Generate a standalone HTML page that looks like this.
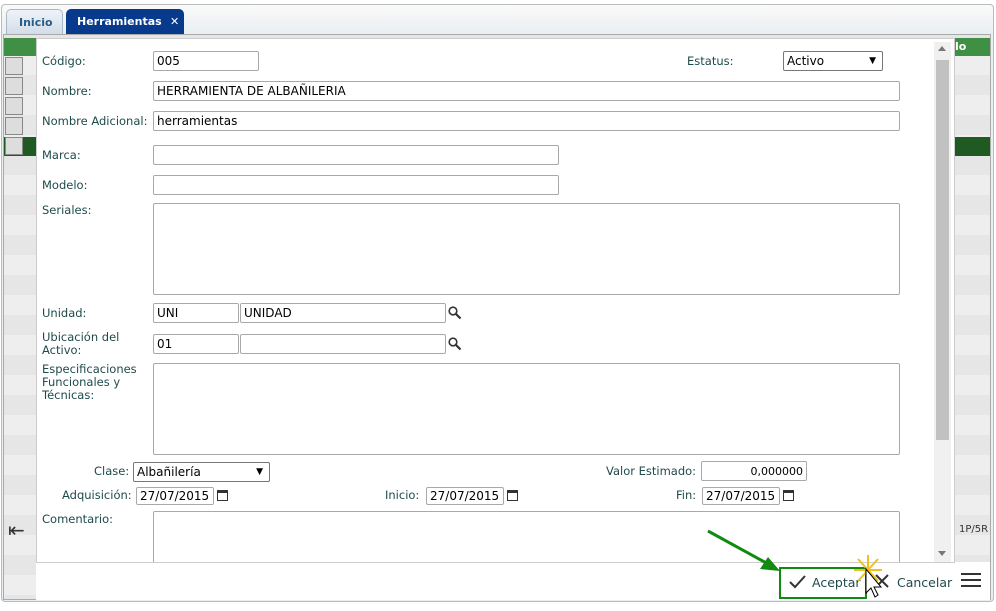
<!DOCTYPE html>
<html><head><style>
*{box-sizing:border-box}
body{margin:0;width:996px;height:611px;background:#fff;font-family:"DejaVu Sans","Liberation Sans",sans-serif;font-size:12px;color:#1f4a4a;position:relative;overflow:hidden}
.a{position:absolute}
.in{position:absolute;border:1px solid #a9a9a9;border-radius:2px;background:#fff;height:20px;font-size:12px;color:#000;padding:1px 3px;line-height:17px}
.lb{position:absolute;font-size:11.5px;color:#1f4a4a}
.cal{position:absolute;width:11px;height:11px;border:1.5px solid #333;border-top-width:3px}
</style></head><body>
<div class="a" style="left:1px;top:4px;width:993px;height:598px;border:1px solid #bbb;border-radius:4px;background:linear-gradient(#fafafa,#e8eef2 30px)"></div>
<div class="a" style="left:6px;top:9px;width:57px;height:25px;border:1px solid #a8b8c8;border-bottom:none;border-radius:5px 5px 0 0;background:linear-gradient(#eef3f8,#d3dde8);color:#2a5c8a;font-weight:bold;font-size:11px;padding:6px 0 0 12px">Inicio</div>
<div class="a" style="left:66px;top:9px;width:118px;height:25px;border-radius:5px 5px 0 0;background:#073a8c;color:#fff;font-weight:bold;font-size:11px;padding:6px 0 0 11px">Herramientas<span style="position:absolute;left:104px;font-size:11px">✕</span></div>
<div class="a" style="left:3px;top:34px;width:988px;height:566px;border:1px solid #aaa;background:repeating-linear-gradient(#e6e6e6 0 20px,#eeeeee 20px 40px)"></div>
<div class="a" style="left:4px;top:38px;width:986px;height:18px;background:#3f8f45"></div>
<div class="a" style="left:955px;top:40px;color:#fff;font-weight:bold;font-size:11px">lo</div>
<div class="a" style="left:4px;top:137px;width:986px;height:19px;background:#1f5a23"></div>
<div class="a" style="left:5px;top:57px;width:18px;height:18px;border:1px solid #888;background:#ddd"></div>
<div class="a" style="left:5px;top:77px;width:18px;height:18px;border:1px solid #888;background:#ddd"></div>
<div class="a" style="left:5px;top:97px;width:18px;height:18px;border:1px solid #888;background:#ddd"></div>
<div class="a" style="left:5px;top:117px;width:18px;height:18px;border:1px solid #888;background:#ddd"></div>
<div class="a" style="left:5px;top:137px;width:18px;height:18px;border:1px solid #888;background:#ddd"></div>
<div class="a" style="left:8px;top:518px;font-size:20px;color:#333">⇤</div>
<div class="a" style="left:959px;top:524px;font-size:10px;color:#333">1P/5R</div>
<div class="a" style="left:36px;top:38px;width:919px;height:562px;background:#fff;border:1px solid #ccc"></div>
<div class="a" style="left:934px;top:42px;width:17px;height:520px;background:#f0f0f0"></div>
<div class="a" style="left:936px;top:60px;width:13px;height:380px;background:#c1c1c1"></div>
<div class="a" style="left:938px;top:46px;width:0;height:0;border:4px solid transparent;border-bottom:5px solid #777;border-top:none"></div>
<div class="a" style="left:938px;top:551px;width:0;height:0;border:4px solid transparent;border-top:5px solid #777;border-bottom:none"></div>

<div class="lb" style="left:42px;top:54px">Código:</div><div class="in" style="left:153px;top:51px;width:106px">005</div>
<div class="lb" style="left:687px;top:54px">Estatus:</div><div class="in" style="left:783px;top:51px;width:100px;border-color:#777">Activo<span style="position:absolute;right:6px;font-size:9px">▼</span></div>
<div class="lb" style="left:42px;top:84px">Nombre:</div><div class="in" style="left:153px;top:81px;width:747px">HERRAMIENTA DE ALBAÑILERIA</div>
<div class="lb" style="left:42px;top:114px">Nombre Adicional:</div><div class="in" style="left:153px;top:111px;width:747px">herramientas</div>
<div class="lb" style="left:42px;top:148px">Marca:</div><div class="in" style="left:153px;top:145px;width:406px"></div>
<div class="lb" style="left:42px;top:178px">Modelo:</div><div class="in" style="left:153px;top:175px;width:406px"></div>
<div class="lb" style="left:42px;top:203px">Seriales:</div><div class="in" style="left:153px;top:203px;width:747px;height:92px"></div>
<div class="lb" style="left:42px;top:306px">Unidad:</div><div class="in" style="left:153px;top:303px;width:86px">UNI</div><div class="in" style="left:240px;top:303px;width:206px">UNIDAD</div>
<svg class="a" style="left:448px;top:306px" width="14" height="14"><circle cx="5" cy="5" r="3.8" fill="none" stroke="#333" stroke-width="1.6"/><line x1="8" y1="8" x2="12.5" y2="12.5" stroke="#333" stroke-width="2.2"/></svg>
<div class="lb" style="left:42px;top:331px;line-height:13px">Ubicación del<br>Activo:</div><div class="in" style="left:153px;top:334px;width:86px">01</div><div class="in" style="left:240px;top:334px;width:206px"></div>
<svg class="a" style="left:448px;top:337px" width="14" height="14"><circle cx="5" cy="5" r="3.8" fill="none" stroke="#333" stroke-width="1.6"/><line x1="8" y1="8" x2="12.5" y2="12.5" stroke="#333" stroke-width="2.2"/></svg>
<div class="lb" style="left:42px;top:363px;line-height:13px">Especificaciones<br>Funcionales y<br>Técnicas:</div><div class="in" style="left:153px;top:363px;width:747px;height:92px"></div>
<div class="lb" style="left:94px;top:464px">Clase:</div><div class="in" style="left:133px;top:462px;width:137px;border-color:#777">Albañilería<span style="position:absolute;right:6px;font-size:9px">▼</span></div>
<div class="lb" style="left:606px;top:464px">Valor Estimado:</div><div class="in" style="left:701px;top:461px;width:106px;text-align:right;font-size:11px">0,000000</div>
<div class="lb" style="left:62px;top:488px">Adquisición:</div><div class="in" style="left:136px;top:487px;width:78px;height:18px;line-height:15px">27/07/2015</div><div class="cal" style="left:217px;top:490px"></div>
<div class="lb" style="left:385px;top:488px">Inicio:</div><div class="in" style="left:426px;top:487px;width:78px;height:18px;line-height:15px">27/07/2015</div><div class="cal" style="left:507px;top:490px"></div>
<div class="lb" style="left:676px;top:488px">Fin:</div><div class="in" style="left:702px;top:487px;width:78px;height:18px;line-height:15px">27/07/2015</div><div class="cal" style="left:783px;top:490px"></div>
<div class="lb" style="left:42px;top:512px">Comentario:</div><div class="in" style="left:153px;top:511px;width:747px;height:60px"></div>
<div class="a" style="left:36px;top:562px;width:919px;height:38px;background:#fff;border-top:1px solid #ccc"></div>
<div class="a" style="left:955px;top:562px;width:35px;height:38px;background:#fff"></div>
<div class="a" style="left:779px;top:567px;width:88px;height:32px;border:2px solid #118a11"></div>
<svg class="a" style="left:789px;top:574px" width="18" height="16"><polyline points="1,8 6,13 16,2" fill="none" stroke="#333" stroke-width="2"/></svg>
<div class="a" style="left:812px;top:575px;font-size:12.5px">Aceptar</div>
<svg class="a" style="left:874px;top:573px" width="16" height="16"><path d="M2 2L14 14M14 2L2 14" stroke="#333" stroke-width="2"/></svg>
<div class="a" style="left:897px;top:575px;font-size:12.5px">Cancelar</div>
<div class="a" style="left:961px;top:573px;width:20px;height:2px;background:#333;box-shadow:0 6px #333,0 12px #333"></div>
<svg class="a" style="left:700px;top:525px" width="190" height="80">
<line x1="8" y1="6" x2="70" y2="40" stroke="#118a11" stroke-width="3"/>
<polygon points="80,46 60,44 68,32" fill="#118a11"/>
<g stroke="#f0c020" stroke-width="2"><line x1="158" y1="34" x2="178" y2="56"/><line x1="178" y1="34" x2="158" y2="56"/><line x1="168" y1="30" x2="168" y2="60"/><line x1="154" y1="45" x2="182" y2="45"/></g>
<polygon points="166,44 166,68 171,63 175,72 178,70 174,62 181,62" fill="#fff" stroke="#000" stroke-width="1"/>
</svg>
</body></html>
